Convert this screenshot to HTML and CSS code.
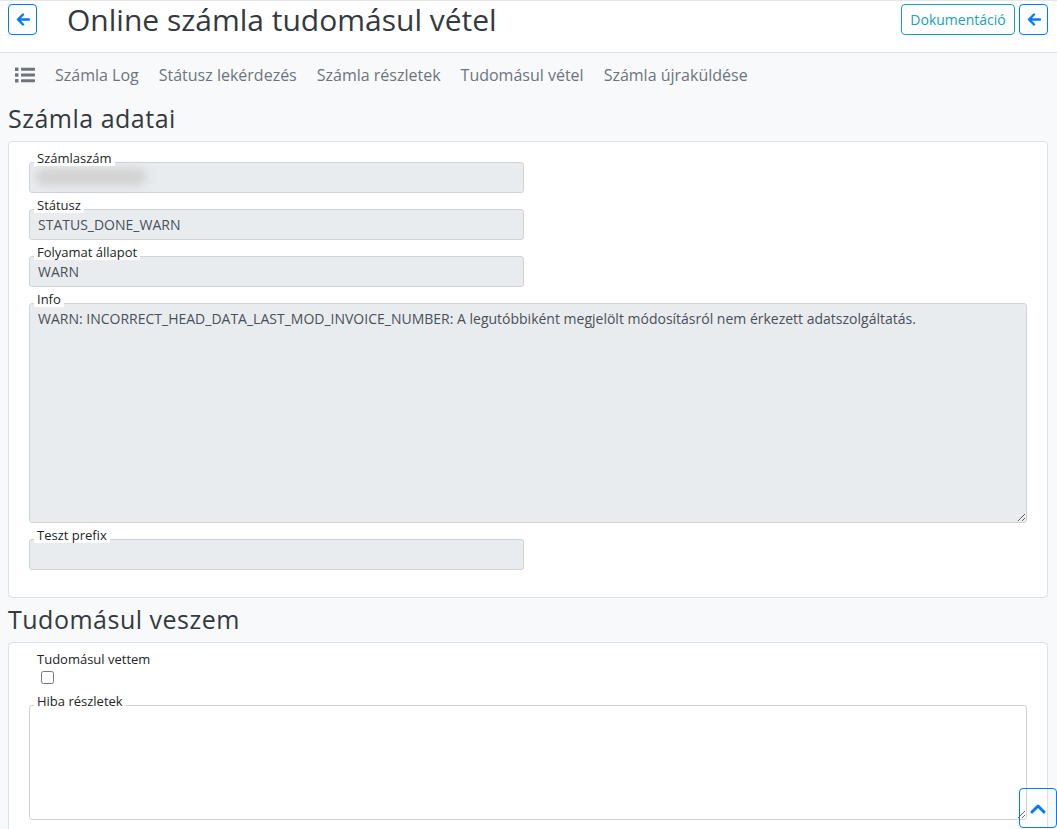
FILE: index.html
```html
<!DOCTYPE html>
<html lang="hu">
<head>
<meta charset="utf-8">
<title>Online számla tudomásul vétel</title>
<link rel="stylesheet" href="styles.css">
</head>
<body>
<header class="topbar">
  <button class="btn btn-icon" type="button" aria-label="Vissza">
    <svg width="14" height="13" viewBox="0 0 14 13"><path d="M13 6.5H2.5M7 1.5L2 6.5L7 11.5" fill="none" stroke="#007bff" stroke-width="2.4" stroke-linecap="round" stroke-linejoin="round"/></svg>
  </button>
  <h1 class="title">Online számla tudomásul vétel</h1>
  <div class="topbar-actions">
    <button class="btn btn-doc" type="button">Dokumentáció</button>
    <button class="btn btn-icon" type="button" aria-label="Vissza">
      <svg width="14" height="13" viewBox="0 0 14 13"><path d="M13 6.5H2.5M7 1.5L2 6.5L7 11.5" fill="none" stroke="#007bff" stroke-width="2.4" stroke-linecap="round" stroke-linejoin="round"/></svg>
    </button>
  </div>
</header>

<nav class="subnav">
  <svg class="menu-icon" width="20" height="16" viewBox="0 0 20 16">
    <rect x="0" y="0.5" width="3.5" height="3.5" rx="0.6" fill="#6c757d"/>
    <rect x="0" y="6.2" width="3.5" height="3.5" rx="0.6" fill="#6c757d"/>
    <rect x="0" y="12" width="3.5" height="3.5" rx="0.6" fill="#6c757d"/>
    <rect x="6" y="0.7" width="14" height="3" rx="0.6" fill="#6c757d"/>
    <rect x="6" y="6.5" width="14" height="3" rx="0.6" fill="#6c757d"/>
    <rect x="6" y="12.2" width="14" height="3" rx="0.6" fill="#6c757d"/>
  </svg>
  <a class="nav-link" href="#">Számla Log</a>
  <a class="nav-link" href="#">Státusz lekérdezés</a>
  <a class="nav-link" href="#">Számla részletek</a>
  <a class="nav-link" href="#">Tudomásul vétel</a>
  <a class="nav-link" href="#">Számla újraküldése</a>
</nav>

<main class="content">
  <h2 class="section-title">Számla adatai</h2>
  <section class="card">
    <div class="form-group half">
      <label class="float-label">Számlaszám</label>
      <div class="field"><span class="redacted"></span></div>
    </div>
    <div class="form-group half">
      <label class="float-label">Státusz</label>
      <div class="field">STATUS_DONE_WARN</div>
    </div>
    <div class="form-group half">
      <label class="float-label">Folyamat állapot</label>
      <div class="field">WARN</div>
    </div>
    <div class="form-group">
      <label class="float-label">Info</label>
      <textarea class="area area-readonly" rows="10" readonly>WARN: INCORRECT_HEAD_DATA_LAST_MOD_INVOICE_NUMBER: A legutóbbiként megjelölt módosításról nem érkezett adatszolgáltatás.</textarea>
    </div>
    <div class="form-group half">
      <label class="float-label">Teszt prefix</label>
      <div class="field"></div>
    </div>
  </section>

  <h2 class="section-title">Tudomásul veszem</h2>
  <section class="card">
    <div class="form-group">
      <label class="float-label plain">Tudomásul vettem</label>
      <div class="check-row"><input type="checkbox" class="check"></div>
    </div>
    <div class="form-group">
      <label class="float-label">Hiba részletek</label>
      <textarea class="area" rows="5"></textarea>
    </div>
  </section>
</main>

<button class="scroll-top" type="button" aria-label="Fel">
  <svg width="16" height="11" viewBox="0 0 16 11"><path d="M2 9L8 3L14 9" fill="none" stroke="#007bff" stroke-width="3" stroke-linecap="round" stroke-linejoin="round"/></svg>
</button>
</body>
</html>
```

FILE: styles.css
```css
* { box-sizing: border-box; }

html, body {
  margin: 0;
  padding: 0;
}

body {
  background: #f8f9fa;
  font-family: "Open Sans", "Noto Sans", sans-serif;
  color: #212529;
  font-size: 14px;
}

.topbar {
  display: flex;
  align-items: flex-start;
  height: 53px;
  padding: 3px 9px 0 8px;
  background: #fff;
  border-top: 1px solid #e4e6e9;
  border-bottom: 1px solid #dee2e6;
}

.btn {
  font-family: inherit;
  background: transparent;
  border: 1px solid #007bff;
  border-radius: 4px;
  height: 31px;
  cursor: pointer;
  display: inline-flex;
  align-items: center;
  justify-content: center;
  padding: 0;
}

.btn-icon {
  width: 29px;
}

.btn-doc {
  border-color: #17a2b8;
  color: #17a2b8;
  font-size: 14px;
  width: 114px;
}

.title {
  margin: 0 0 0 30px;
  font-size: 30px;
  line-height: 31px;
  font-weight: 400;
  color: #343a40;
  letter-spacing: 0;
}

.topbar-actions {
  margin-left: auto;
  display: flex;
  gap: 4px;
}

.subnav {
  display: flex;
  align-items: center;
  height: 44px;
  padding: 0 8px 0 15px;
}

.menu-icon {
  margin-right: 10px;
}

.nav-link {
  font-size: 16px;
  line-height: 24px;
  color: #6c757d;
  text-decoration: none;
  padding: 0 10px;
}

.content {
  padding: 0 9px 0 8px;
}

.section-title {
  margin: 7px 0 8px;
  font-size: 25px;
  line-height: 29px;
  font-weight: 400;
  color: #343a40;
  letter-spacing: 0.5px;
}

.card {
  background: #fff;
  border: 1px solid #dee2e6;
  border-radius: 4px;
  padding: 8px 20px 23px;
}

.form-group {
  margin-bottom: 4px;
}

.form-group.half {
  width: 495px;
}

.float-label {
  display: block;
  width: fit-content;
  position: relative;
  z-index: 1;
  margin: 0 0 -4px 5px;
  padding: 0 3px;
  background: #fff;
  font-size: 13px;
  line-height: 16px;
  color: #212529;
}

.float-label.plain {
  margin-bottom: 0;
}

.field {
  display: block;
  height: 31px;
  padding: 4px 8px;
  background: #e9ecef;
  border: 1px solid #ced4da;
  border-radius: 3px;
  font-size: 14px;
  line-height: 21px;
  color: #495057;
}

.redacted {
  display: inline-block;
  width: 112px;
  height: 18px;
  margin: 1px 0 0 -3px;
  background: #d2d2d2;
  border-radius: 9px;
  filter: blur(5px);
  vertical-align: top;
}

.area {
  display: block;
  width: 100%;
  padding: 4px 8px;
  border: 1px solid #ced4da;
  border-radius: 3px;
  font-family: inherit;
  font-size: 14px;
  line-height: 21px;
  color: #495057;
  background: #fff;
  margin: 0;
}

.area-readonly {
  background: #e9ecef;
}

.check-row {
  height: 18px;
}

.check {
  margin: 4px 0 0 12px;
  width: 13px;
  height: 13px;
  display: block;
}

.scroll-top {
  position: fixed;
  right: 0;
  bottom: 1px;
  width: 38px;
  height: 40px;
  border: 1px solid #007bff;
  border-radius: 4px;
  background: transparent;
  display: flex;
  align-items: center;
  justify-content: center;
  padding: 0;
  cursor: pointer;
}
```
